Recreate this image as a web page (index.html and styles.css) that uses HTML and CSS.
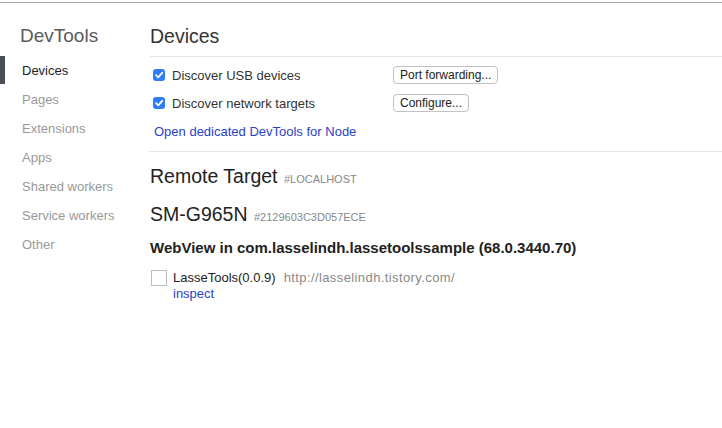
FILE: index.html
```html
<!DOCTYPE html>
<html>
<head>
<meta charset="utf-8">
<link rel="stylesheet" href="styles.css">
</head>
<body>
<div class="app">
  <nav class="sidebar">
    <h1 class="brand">DevTools</h1>
    <ul class="menu">
      <li class="item active">Devices</li>
      <li class="item">Pages</li>
      <li class="item">Extensions</li>
      <li class="item">Apps</li>
      <li class="item">Shared workers</li>
      <li class="item">Service workers</li>
      <li class="item">Other</li>
    </ul>
  </nav>
  <main class="content">
    <h2 class="title">Devices</h2>
    <section class="options">
      <div class="row">
        <label class="check"><span class="box checked"><svg viewBox="0 0 12 12" width="12" height="12"><path d="M3 6.2 L5.2 8.4 L9.2 3.8" fill="none" stroke="#fff" stroke-width="1.8" stroke-linecap="round" stroke-linejoin="round"/></svg></span>Discover USB devices</label>
        <button class="btn">Port forwarding...</button>
      </div>
      <div class="row">
        <label class="check"><span class="box checked"><svg viewBox="0 0 12 12" width="12" height="12"><path d="M3 6.2 L5.2 8.4 L9.2 3.8" fill="none" stroke="#fff" stroke-width="1.8" stroke-linecap="round" stroke-linejoin="round"/></svg></span>Discover network targets</label>
        <button class="btn">Configure...</button>
      </div>
      <a class="link node-link">Open dedicated DevTools for Node</a>
    </section>
    <section class="targets">
      <h3 class="target-head">Remote Target <span class="tag">#LOCALHOST</span></h3>
      <h3 class="device-head">SM-G965N <span class="tag">#2129603C3D057ECE</span></h3>
      <h4 class="browser">WebView in com.lasselindh.lassetoolssample (68.0.3440.70)</h4>
      <div class="page">
        <span class="thumb"></span>
        <div class="page-info">
          <div class="page-line"><span class="page-name">LasseTools(0.0.9)</span><span class="page-url">http://lasselindh.tistory.com/</span></div>
          <a class="link inspect">inspect</a>
        </div>
      </div>
    </section>
  </main>
</div>
</body>
</html>
```

FILE: styles.css
```css
* { box-sizing: border-box; }
html, body { margin: 0; padding: 0; background: #fff; }
body {
  font-family: "Liberation Sans", Arial, sans-serif;
  font-size: 13px;
  color: #333;
  border-top: 2px solid #fff;
}
.app {
  display: flex;
  border-top: 1px solid #aaa;
  min-height: 425px;
}
.sidebar {
  width: 141px;
  flex: none;
  padding-top: 20px;
}
.brand {
  margin: 0 0 0 20px;
  font-size: 19px;
  font-weight: normal;
  color: #5a5a5a;
  line-height: 25px;
}
.menu {
  list-style: none;
  margin: 8px 0 0;
  padding: 0;
}
.item {
  height: 29px;
  line-height: 29px;
  padding-left: 22px;
  color: #999;
  position: relative;
}
.item.active {
  color: #222;
}
.item.active::before {
  content: "";
  position: absolute;
  left: 0;
  top: 0;
  width: 5px;
  height: 28px;
  background: #4a4f57;
}
.content {
  flex: 1;
  padding-top: 20px;
}
.title {
  margin: 0 0 0 9px;
  font-size: 19.5px;
  font-weight: normal;
  color: #333;
  line-height: 26px;
  padding-bottom: 7px;
  border-bottom: 1px solid #e6e6e6;
}
.options {
  padding: 4px 0 11px 12px;
  border-bottom: 1px solid #e6e6e6;
  margin-left: 8px;
}
.row {
  display: flex;
  align-items: center;
  height: 28px;
}
.check {
  display: flex;
  align-items: center;
  width: 240px;
  margin-left: -8px;
}
.box {
  width: 12px;
  height: 12px;
  border-radius: 3px;
  margin-right: 7px;
  display: inline-flex;
}
.box.checked { background: #2f7cf6; }
.btn {
  font-family: "Liberation Sans", Arial, sans-serif;
  font-size: 12px;
  color: #222;
  background: #fff;
  border: 1px solid #c2c2c2;
  border-radius: 4px;
  height: 18px;
  padding: 0 6px;
  line-height: 16px;
}
.link {
  color: #2b3fc9;
  display: block;
}
.node-link {
  margin: 7px 0 0 -7px;
  line-height: 16px;
}
.targets {
  padding-left: 9px;
  padding-top: 11px;
}
.target-head, .device-head {
  margin: 0;
  font-size: 19.5px;
  font-weight: normal;
  line-height: 26px;
  color: #222;
}
.device-head { margin-top: 9px; }
.tag {
  font-size: 11px;
  color: #888;
  margin-left: 1px;
}
.browser {
  margin: 8px 0 0;
  font-size: 15px;
  font-weight: bold;
  color: #222;
  line-height: 20px;
}
.page {
  display: flex;
  margin-top: 12px;
}
.thumb {
  width: 16px;
  height: 16px;
  border: 1px solid #bbb;
  margin: 0 6px 0 1px;
  flex: none;
}
.page-line {
  line-height: 16px;
}
.page-name { color: #222; margin-right: 8px; }
.page-url { color: #888; letter-spacing: 0.4px; }
.inspect { line-height: 16px; }
```
